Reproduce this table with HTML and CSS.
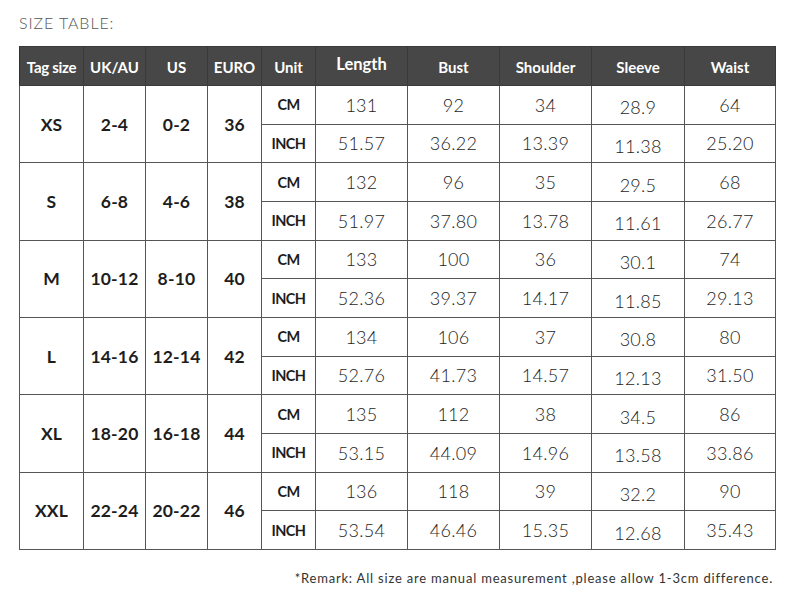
FILE: index.html
```html
<!DOCTYPE html>
<html>
<head>
<meta charset="utf-8">
<link rel="stylesheet" href="styles.css">
</head>
<body>
<div class="page">
  <h1 class="title">SIZE TABLE:</h1>
  <table class="size-table">
    <colgroup>
      <col style="width:64px"><col style="width:62px"><col style="width:62px"><col style="width:54px"><col style="width:54px">
      <col style="width:92px"><col style="width:92px"><col style="width:92px"><col style="width:93px"><col style="width:91px">
    </colgroup>
    <thead>
      <tr>
        <th class="small">Tag size</th><th>UK/AU</th><th>US</th><th>EURO</th><th>Unit</th>
        <th class="big">Length</th><th>Bust</th><th>Shoulder</th><th>Sleeve</th><th>Waist</th>
      </tr>
    </thead>
    <tbody>
      <tr><td class="lbl" rowspan="2">XS</td><td class="lbl" rowspan="2">2-4</td><td class="lbl" rowspan="2">0-2</td><td class="lbl" rowspan="2">36</td>
        <td class="unit">CM</td><td class="num">131</td><td class="num">92</td><td class="num">34</td><td class="num low">28.9</td><td class="num">64</td></tr>
      <tr><td class="unit">INCH</td><td class="num">51.57</td><td class="num">36.22</td><td class="num">13.39</td><td class="num low">11.38</td><td class="num">25.20</td></tr>

      <tr><td class="lbl" rowspan="2">S</td><td class="lbl" rowspan="2">6-8</td><td class="lbl" rowspan="2">4-6</td><td class="lbl" rowspan="2">38</td>
        <td class="unit">CM</td><td class="num">132</td><td class="num">96</td><td class="num">35</td><td class="num low">29.5</td><td class="num">68</td></tr>
      <tr><td class="unit">INCH</td><td class="num">51.97</td><td class="num">37.80</td><td class="num">13.78</td><td class="num low">11.61</td><td class="num">26.77</td></tr>

      <tr><td class="lbl" rowspan="2">M</td><td class="lbl" rowspan="2">10-12</td><td class="lbl" rowspan="2">8-10</td><td class="lbl" rowspan="2">40</td>
        <td class="unit">CM</td><td class="num">133</td><td class="num">100</td><td class="num">36</td><td class="num low">30.1</td><td class="num">74</td></tr>
      <tr><td class="unit">INCH</td><td class="num">52.36</td><td class="num">39.37</td><td class="num">14.17</td><td class="num low">11.85</td><td class="num">29.13</td></tr>

      <tr><td class="lbl" rowspan="2">L</td><td class="lbl" rowspan="2">14-16</td><td class="lbl" rowspan="2">12-14</td><td class="lbl" rowspan="2">42</td>
        <td class="unit">CM</td><td class="num">134</td><td class="num">106</td><td class="num">37</td><td class="num low">30.8</td><td class="num">80</td></tr>
      <tr><td class="unit">INCH</td><td class="num">52.76</td><td class="num">41.73</td><td class="num">14.57</td><td class="num low">12.13</td><td class="num">31.50</td></tr>

      <tr><td class="lbl" rowspan="2">XL</td><td class="lbl" rowspan="2">18-20</td><td class="lbl" rowspan="2">16-18</td><td class="lbl" rowspan="2">44</td>
        <td class="unit">CM</td><td class="num">135</td><td class="num">112</td><td class="num">38</td><td class="num low">34.5</td><td class="num">86</td></tr>
      <tr><td class="unit">INCH</td><td class="num">53.15</td><td class="num">44.09</td><td class="num">14.96</td><td class="num low">13.58</td><td class="num">33.86</td></tr>

      <tr><td class="lbl" rowspan="2">XXL</td><td class="lbl" rowspan="2">22-24</td><td class="lbl" rowspan="2">20-22</td><td class="lbl" rowspan="2">46</td>
        <td class="unit">CM</td><td class="num">136</td><td class="num">118</td><td class="num">39</td><td class="num low">32.2</td><td class="num">90</td></tr>
      <tr><td class="unit">INCH</td><td class="num">53.54</td><td class="num">46.46</td><td class="num">15.35</td><td class="num low">12.68</td><td class="num">35.43</td></tr>
    </tbody>
  </table>
  <p class="remark">*Remark: All size are manual measurement ,please allow 1-3cm difference.</p>
</div>
</body>
</html>
```

FILE: styles.css
```css
* { box-sizing: border-box; }
html, body { margin: 0; padding: 0; background: #fff; }
.page {
  width: 796px;
  height: 598px;
  padding: 14px 20px 0 19px;
  font-family: "Lato", "Open Sans", sans-serif;
}
.title {
  margin: 0 0 14px 0;
  font-family: "Lato", sans-serif;
  font-weight: 300;
  font-size: 16px;
  line-height: 18px;
  color: #555;
  letter-spacing: 0.9px;
}
.size-table {
  border-collapse: collapse;
  table-layout: fixed;
  width: 756px;
}
.size-table th {
  background: #474747;
  color: #fff;
  font-family: "Lato", sans-serif;
  font-weight: 700;
  font-size: 15px;
  height: 39px;
  border: 1px solid #3a3a3a;
  border-left-color: #2e2e2e;
  padding: 2px 0 0 0;
  text-align: center;
  white-space: nowrap;
  letter-spacing: 0;
}
.size-table th.small { font-size: 15px; letter-spacing: -0.3px; }
.size-table th.big { font-size: 16.5px; padding-top: 0; padding-bottom: 4px; }
.size-table td {
  border: 1px solid #555;
  height: 38.67px;
  padding: 0;
  text-align: center;
  color: #1d1d1d;
}
.lbl {
  font-weight: 700;
  font-size: 17.5px;
  letter-spacing: 0.2px;
}
.unit {
  font-weight: 700;
  font-size: 14.5px;
  letter-spacing: -0.6px;
}
.num {
  font-weight: 300;
  font-size: 18px;
  letter-spacing: 0.3px;
  color: #2a2a2a;
}
.num.low { padding-top: 5px !important; }
.remark {
  margin: 20px 3px 0 0;
  text-align: right;
  font-family: "Lato", sans-serif;
  font-weight: 400;
  font-size: 13px;
  color: #333;
  letter-spacing: 0.8px;
}
```
